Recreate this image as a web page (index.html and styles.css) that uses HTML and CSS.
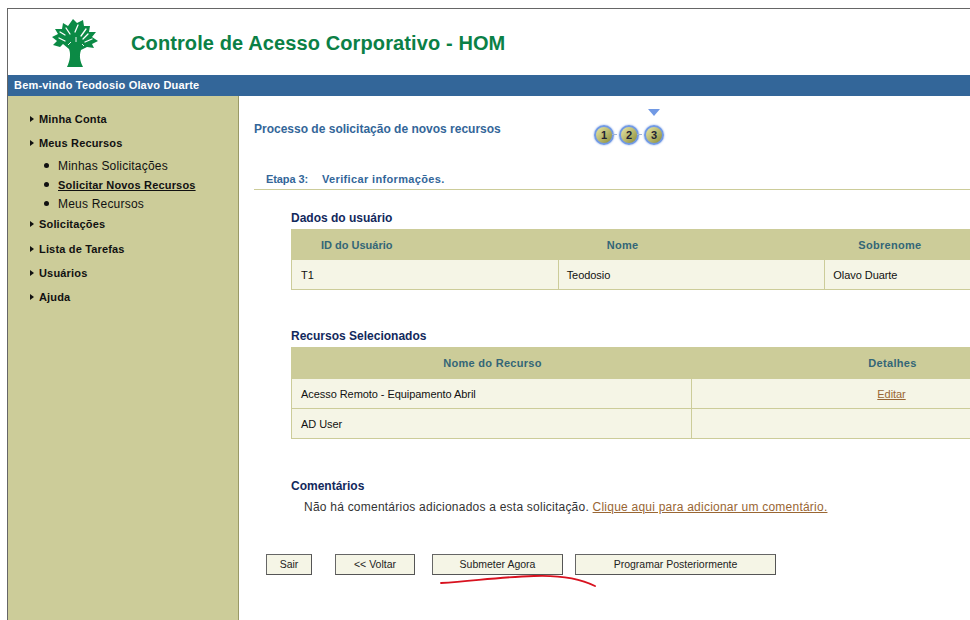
FILE: index.html
```html
<!DOCTYPE html>
<html lang="pt-BR">
<head>
    <meta charset="UTF-8">
    <title>Controle de Acesso Corporativo - HOM</title>
    <link rel="stylesheet" href="styles.css">
</head>
<body>
    <div class="page">
        <div class="header">
            <svg class="logo" width="48" height="50" viewBox="0 0 48 50">
                <path fill="#0b8a45" d="M16 49 C19 43 20 36 18 31 L12 26 L9 29 L2 27 L6 23 L1 19 L7 16 L4 11 L11 11 L12 5 L17 8 L22 1 L26 5 L32 2 L33 8 L39 8 L38 14 L45 14 L41 19 L47 23 L41 26 L43 30 L36 29 L30 32 C28 38 29 43 32 49 Z"/>
                <path fill="none" stroke="#fff" stroke-width="1.3" stroke-linecap="round" d="M15 10 L19 16 M27 7 L24 14 M35 11 L30 18 M8 20 L14 23 M41 21 L34 24 M9 14 L14 17 M37 16 L32 21"/>
                <path fill="none" stroke="#fff" stroke-width="0.9" d="M20 24 L17 27 M31 26 L33 28 M25 19 L25 24"/>
            </svg>
            <h1>Controle de Acesso Corporativo - HOM</h1>
        </div>
        <div class="welcome">Bem-vindo Teodosio Olavo Duarte</div>
        <div class="content">
            <div class="sidebar">
                <ul class="menu">
                    <li class="menu-first">Minha Conta</li>
                    <li>Meus Recursos
                        <ul class="submenu">
                            <li>Minhas Solicitações</li>
                            <li class="current">Solicitar Novos Recursos</li>
                            <li>Meus Recursos</li>
                        </ul>
                    </li>
                    <li class="menu-tight">Solicitações</li>
                    <li>Lista de Tarefas</li>
                    <li>Usuários</li>
                    <li>Ajuda</li>
                </ul>
            </div>
            <div class="main">
                <div class="process">
                    <h2>Processo de solicitação de novos recursos</h2>
                    <div class="steps">
                        <span class="step">1</span>
                        <span class="step">2</span>
                        <span class="step step-active">3</span>
                    </div>
                </div>
                <div class="stage"><span class="stage-num">Etapa 3:</span><span>Verificar informações.</span></div>

                <div class="section section-user">
                    <h3>Dados do usuário</h3>
                    <table class="grid">
                        <tr>
                            <th class="col-id">ID do Usuário</th>
                            <th class="col-name">Nome</th>
                            <th class="col-surname">Sobrenome</th>
                        </tr>
                        <tr>
                            <td>T1</td>
                            <td>Teodosio</td>
                            <td>Olavo Duarte</td>
                        </tr>
                    </table>
                </div>

                <div class="section section-resources">
                    <h3>Recursos Selecionados</h3>
                    <table class="grid">
                        <tr>
                            <th class="center">Nome do Recurso</th>
                            <th class="center">Detalhes</th>
                        </tr>
                        <tr>
                            <td>Acesso Remoto - Equipamento Abril</td>
                            <td class="center"><a href="#">Editar</a></td>
                        </tr>
                        <tr>
                            <td>AD User</td>
                            <td></td>
                        </tr>
                    </table>
                </div>

                <div class="section section-comments">
                    <h3>Comentários</h3>
                    <p>Não há comentários adicionados a esta solicitação. <a href="#">Clique aqui para adicionar um comentário.</a></p>
                </div>

                <div class="buttons">
                    <button class="btn btn-exit">Sair</button>
                    <button class="btn btn-back">&lt;&lt; Voltar</button>
                    <button class="btn btn-submit">Submeter Agora</button>
                    <button class="btn btn-later">Programar Posteriormente</button>
                </div>
            </div>
        </div>
    </div>

    <svg class="scribble" width="170" height="20" viewBox="0 0 170 20">
        <path fill="none" stroke="#d8121f" stroke-width="1.8" stroke-linecap="round" d="M2 12 C35 10 60 6 95 5 C122 4 140 7 156 15"/>
    </svg>
</body>
</html>
```

FILE: styles.css
```css
* {
    margin: 0;
    padding: 0;
    box-sizing: border-box;
}

html, body {
    height: 620px;
    overflow: hidden;
}

body {
    font-family: "Liberation Sans", Arial, sans-serif;
    font-size: 11px;
    background: white;
    color: #111;
    padding: 8px 0 0 7px;
    position: relative;
}

.page {
    border-top: 1px solid #666;
    border-left: 1px solid #666;
    height: 612px;
    overflow: hidden;
}

.header {
    height: 66px;
    display: flex;
    align-items: center;
}

.logo {
    margin-left: 43px;
    margin-top: 1px;
}

.header h1 {
    color: #0b8046;
    font-size: 20px;
    letter-spacing: 0.11px;
    margin-left: 32px;
    margin-top: 2px;
}

.welcome {
    height: 21px;
    line-height: 21px;
    background: #336699;
    color: white;
    font-weight: bold;
    padding-left: 6px;
    letter-spacing: 0.19px;
}

.content {
    display: flex;
    height: 525px;
}

/* menu lateral */
.sidebar {
    width: 231px;
    flex: none;
    background: #cccc99;
    border-right: 1px solid #999966;
    padding: 16px 0 0 31px;
}

.menu {
    list-style: none;
    font-weight: bold;
    letter-spacing: 0.17px;
}

.menu > li {
    position: relative;
    line-height: 14px;
    margin-top: 10px;
}

.menu > li::before {
    content: "";
    position: absolute;
    left: -9px;
    top: 4px;
    border-left: 4px solid #111;
    border-top: 3.5px solid transparent;
    border-bottom: 3.5px solid transparent;
}

.menu > li.menu-first {
    margin-top: 0;
}

.menu > li.menu-tight {
    margin-top: 6px;
    margin-bottom: 11px;
}

.submenu {
    list-style: none;
    font-size: 12px;
    font-weight: normal;
    letter-spacing: 0.2px;
    margin-top: 9px;
}

.submenu li {
    position: relative;
    padding-left: 19px;
    line-height: 14px;
    margin-bottom: 5px;
}

.submenu li::before {
    content: "";
    position: absolute;
    left: 5px;
    top: 4px;
    width: 5px;
    height: 5px;
    border-radius: 50%;
    background: #111;
}

.submenu .current {
    font-size: 11px;
    font-weight: bold;
    letter-spacing: 0.18px;
    text-decoration: underline;
}

/* area principal */
.main {
    flex: 1;
    min-width: 0;
    padding-left: 15px;
    overflow: hidden;
}

.process {
    display: flex;
    height: 83px;
}

.process h2 {
    width: 340px;
    color: #336699;
    font-size: 12px;
    line-height: 14px;
    margin-top: 26px;
}

.steps {
    display: flex;
    gap: 5px;
    margin-top: 29px;
    height: 20px;
}

.step {
    position: relative;
    width: 20px;
    height: 20px;
    border: 2px solid #7199e4;
    border-radius: 50%;
    box-shadow: 0 0 2px #7199e4;
    background: linear-gradient(135deg, #e8e8a8, #8c8c38);
    text-align: center;
    font-size: 11px;
    font-weight: bold;
    line-height: 16px;
    color: #223;
}

.step + .step::after {
    content: "";
    position: absolute;
    left: -9px;
    top: 7px;
    width: 5px;
    height: 1px;
    background: #9fb4d8;
}

.step-active::before {
    content: "";
    position: absolute;
    left: 2px;
    top: -18px;
    border-top: 7px solid #7199e4;
    border-left: 6px solid transparent;
    border-right: 6px solid transparent;
}

.stage {
    display: flex;
    gap: 14px;
    height: 22px;
    margin-top: -11px;
    padding: 4px 0 0 12px;
    line-height: 14px;
    color: #336699;
    font-weight: bold;
    border-bottom: 1px solid #cccc99;
    letter-spacing: 0.35px;
}

.stage-num {
    letter-spacing: -0.1px;
}

.section {
    padding-left: 37px;
}

.section h3 {
    color: #12295c;
    font-size: 12px;
    line-height: 14px;
}

.section-user {
    margin-top: 21px;
}

.section-user .grid th {
    height: 30px;
}

.section-resources {
    margin-top: 39px;
}

.section-comments {
    margin-top: 40px;
}

.section-comments p {
    font-size: 12px;
    line-height: 14px;
    color: #333;
    letter-spacing: 0.23px;
    margin: 7px 0 0 13px;
}

.section-comments a,
.grid a {
    color: #996633;
}

.grid {
    width: 801px;
    table-layout: fixed;
    border-collapse: collapse;
    margin-top: 4px;
}

.grid th {
    height: 31px;
    background: #cccc99;
    border: 1px solid #cccc99;
    color: #336677;
    font-size: 11px;
    text-align: left;
    letter-spacing: 0.3px;
}

.grid td {
    height: 30px;
    background: #f5f5e6;
    border: 1px solid #cccc99;
    border-top: 0;
    padding-left: 9px;
    font-size: 11px;
    letter-spacing: -0.06px;
}

.grid td + td {
    padding-left: 8px;
}

.grid .center {
    text-align: center;
    padding-left: 0;
}

.grid th.center {
    padding-left: 2px;
}

.grid .col-id {
    padding-left: 29px;
    letter-spacing: 0;
}

.grid .col-name {
    padding-left: 48px;
}

.grid .col-surname {
    padding-left: 33px;
}

.buttons {
    display: flex;
    margin: 40px 0 0 12px;
}

.btn {
    height: 21px;
    padding-bottom: 2px;
    background: #f5f5e6;
    border: 1px solid #666;
    border-right-color: #555;
    border-bottom-color: #555;
    font-family: inherit;
    font-size: 10.5px;
    color: #222;
}

.btn-exit {
    width: 46px;
    margin-right: 23px;
}

.btn-back {
    width: 80px;
    margin-right: 17px;
}

.btn-submit {
    width: 131px;
    margin-right: 12px;
}

.btn-later {
    width: 201px;
}

/* risco vermelho sobre a tela */
.scribble {
    position: absolute;
    left: 439px;
    top: 571px;
}
```
